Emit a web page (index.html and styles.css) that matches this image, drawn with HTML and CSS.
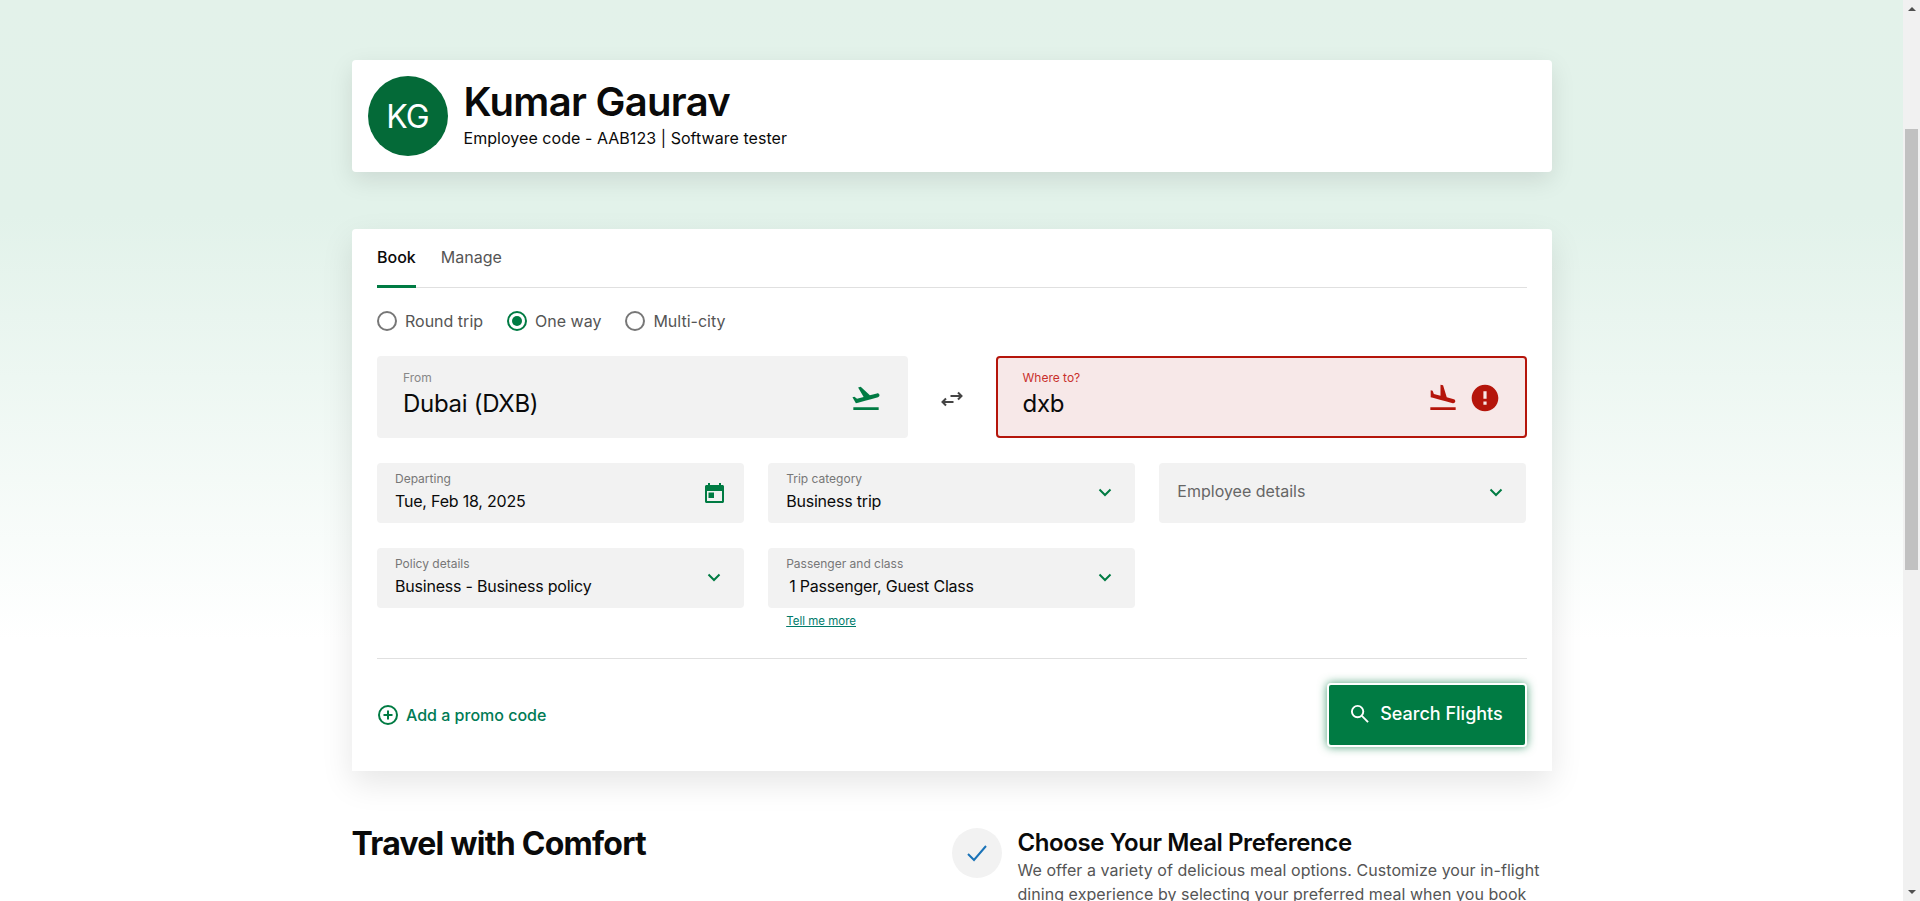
FILE: index.html
```html
<!DOCTYPE html>
<html lang="en">
<head>
    <meta charset="UTF-8">
    <meta name="viewport" content="width=device-width, initial-scale=1.0">
    <title>Book a flight</title>
    <link rel="stylesheet" href="styles.css">
</head>
<body>
    <div class="page">
        <main class="content">
            <!-- Employee -->
            <section class="profile-card">
                <div class="avatar">KG</div>
                <div class="profile-text">
                    <h1>Kumar Gaurav</h1>
                    <p>Employee code - AAB123 | Software tester</p>
                </div>
            </section>

            <!-- Booking widget -->
            <section class="booking-card">
                <div class="tabs">
                    <a href="#" class="tab active">Book</a>
                    <a href="#" class="tab">Manage</a>
                </div>

                <div class="trip-types">
                    <label class="radio"><span class="radio-dot"></span>Round trip</label>
                    <label class="radio checked"><span class="radio-dot"></span>One way</label>
                    <label class="radio"><span class="radio-dot"></span>Multi-city</label>
                </div>

                <div class="route">
                    <div class="route-field">
                        <div class="route-text">
                            <span class="route-label">From</span>
                            <span class="route-value">Dubai (DXB)</span>
                        </div>
                        <svg class="icon-plane" viewBox="0 0 24 24"><path d="M2.5 19h19v2h-19v-2zm19.57-9.36c-.21-.8-1.04-1.28-1.84-1.06L14.92 10l-6.9-6.43-1.93.51 4.14 7.17-4.97 1.33-1.97-1.54-1.45.39 1.82 3.16.77 1.33 1.6-.43 5.31-1.42 4.35-1.16L21 11.49c.81-.23 1.28-1.05 1.07-1.85z"/></svg>
                    </div>
                    <button class="swap" aria-label="Swap">
                        <svg viewBox="0 0 24 24"><path d="M10.5 9h11M18 5.500L21.500 9 18 12.500M13.500 15h-11M6 11.500L2.500 15 6 18.500"/></svg>
                    </button>
                    <div class="route-field error">
                        <div class="route-text">
                            <span class="route-label">Where to?</span>
                            <span class="route-value">dxb</span>
                        </div>
                        <svg class="icon-plane" viewBox="0 0 24 24"><path d="M2.5 19h19v2h-19v-2zm7.180-5.730l4.350 1.160 5.310 1.420c.8.210 1.620-.26 1.840-1.060.21-.8-.26-1.620-1.060-1.840l-5.310-1.420-2.760-9.020L10.120 2v8.280L5.150 8.950l-.93-2.320-1.450-.39v5.170l1.600.43 5.310 1.430z"/></svg>
                        <svg class="icon-error" viewBox="0 0 24 24"><path d="M12 2C6.480 2 2 6.480 2 12s4.480 10 10 10 10-4.480 10-10S17.520 2 12 2zm1.200 15h-2.400v-2.400h2.400V17zm0-4.400h-2.400V7h2.400v5.600z"/></svg>
                    </div>
                </div>

                <div class="fields">
                    <div class="field">
                        <div class="field-text">
                            <span class="field-label">Departing</span>
                            <span class="field-value">Tue, Feb 18, 2025</span>
                        </div>
                        <svg class="icon-calendar" viewBox="0 0 19 20">
                            <path fill-rule="evenodd" d="M3 0h2v2h9V0h2v2h1.500c.8 0 1.500.7 1.500 1.500v15c0 .8-.7 1.500-1.500 1.500h-16C.7 20 0 19.300 0 18.500v-15C0 2.700.7 2 1.500 2H3V0zM2 8v10h15V8H2z"/>
                            <rect x="3.500" y="9.500" width="5.500" height="5.500"/>
                        </svg>
                    </div>
                    <div class="field">
                        <div class="field-text">
                            <span class="field-label">Trip category</span>
                            <span class="field-value">Business trip</span>
                        </div>
                        <svg class="chevron" viewBox="0 0 14 9"><path d="M1.500 1.500L7 7l5.500-5.500"/></svg>
                    </div>
                    <div class="field">
                        <div class="field-text">
                            <span class="field-placeholder">Employee details</span>
                        </div>
                        <svg class="chevron" viewBox="0 0 14 9"><path d="M1.500 1.500L7 7l5.500-5.500"/></svg>
                    </div>
                    <div class="field">
                        <div class="field-text">
                            <span class="field-label">Policy details</span>
                            <span class="field-value">Business - Business policy</span>
                        </div>
                        <svg class="chevron" viewBox="0 0 14 9"><path d="M1.500 1.500L7 7l5.500-5.500"/></svg>
                    </div>
                    <div class="field-group">
                        <div class="field">
                            <div class="field-text">
                                <span class="field-label">Passenger and class</span>
                                <span class="field-value indent">1 Passenger, Guest Class</span>
                            </div>
                            <svg class="chevron" viewBox="0 0 14 9"><path d="M1.500 1.500L7 7l5.500-5.500"/></svg>
                        </div>
                        <a href="#" class="tell-more">Tell me more</a>
                    </div>
                </div>

                <div class="booking-footer">
                    <a href="#" class="promo">
                        <svg viewBox="0 0 20 20"><circle cx="10" cy="10" r="9"/><path d="M10 5.500v9M5.500 10h9"/></svg>
                        Add a promo code
                    </a>
                    <button class="search-btn">
                        <svg viewBox="0 0 20 20"><circle cx="8" cy="8" r="6"/><path d="M12.500 12.500L19 19"/></svg>
                        Search Flights
                    </button>
                </div>
            </section>

            <!-- Comfort section -->
            <section class="comfort">
                <h2>Travel with Comfort</h2>
                <div class="comfort-item">
                    <div class="check-circle">
                        <svg viewBox="0 0 24 24"><path d="M3 13l6 6L21 5"/></svg>
                    </div>
                    <div class="comfort-text">
                        <h3>Choose Your Meal Preference</h3>
                        <p>We offer a variety of delicious meal options. Customize your in-flight dining experience by selecting your preferred meal when you book</p>
                    </div>
                </div>
            </section>
        </main>

        <!-- Scrollbar -->
        <aside class="scrollbar">
            <span class="scroll-up"></span>
            <span class="scroll-thumb"></span>
            <span class="scroll-down"></span>
        </aside>
    </div>
</body>
</html>
```

FILE: styles.css
```css
* {
    margin: 0;
    padding: 0;
    box-sizing: border-box;
}

body {
    font-family: 'Inter', 'Liberation Sans', sans-serif;
    color: #0a0a0a;
    background: #fff;
    overflow: hidden;
}

.page {
    display: flex;
    height: 901px;
    overflow: hidden;
}

.content {
    flex: 1;
    padding: 60px 351.5px 0;
    background: linear-gradient(180deg, #e3f2ea 0, #e2f2ea 215px, #fff 640px);
}

/* Employee */
.profile-card {
    display: flex;
    align-items: center;
    gap: 16px;
    height: 112px;
    padding: 0 16px;
    background: #fff;
    border-radius: 4px;
    box-shadow: 0 8px 24px rgba(0, 0, 0, 0.1);
}

.avatar {
    width: 80px;
    height: 80px;
    flex: none;
    display: flex;
    align-items: center;
    justify-content: center;
    border-radius: 50%;
    background: #046a38;
    color: #fff;
    font-size: 32px;
    letter-spacing: -1px;
}

.profile-text h1 {
    font-size: 40px;
    line-height: 48px;
    font-weight: 600;
    letter-spacing: -0.7px;
    margin-top: -5px;
}

.profile-text p {
    font-size: 16px;
    line-height: 22px;
    letter-spacing: 0.05px;
    margin-top: 1px;
}

/* Booking card */
.booking-card {
    margin-top: 57px;
    height: 542px;
    padding: 0 25px 0 25.5px;
    background: #fff;
    border-radius: 4px 4px 0 0;
    box-shadow: 0 12px 32px rgba(0, 0, 0, 0.1);
}

.tabs {
    display: flex;
    gap: 25px;
    height: 59px;
    border-bottom: 1px solid #e0e0e0;
}

.tab {
    padding-top: 18px;
    font-size: 16px;
    line-height: 20px;
    color: #555;
    text-decoration: none;
}

.tab.active {
    color: #0a0a0a;
    font-weight: 500;
    border-bottom: 3px solid #007b43;
    margin-bottom: -1px;
}

.trip-types {
    display: flex;
    gap: 24px;
    height: 66px;
    margin-bottom: 2px;
    align-items: center;
}

.radio {
    display: flex;
    align-items: center;
    gap: 8px;
    font-size: 16px;
    color: #555;
}

.radio-dot {
    width: 20px;
    height: 20px;
    border: 2px solid #777;
    border-radius: 50%;
    display: flex;
    align-items: center;
    justify-content: center;
}

.radio.checked .radio-dot {
    border-color: #007b43;
}

.radio.checked .radio-dot::after {
    content: "";
    width: 10px;
    height: 10px;
    border-radius: 50%;
    background: #007b43;
}

/* From / to */
.route {
    display: flex;
    align-items: center;
    justify-content: space-between;
}

.route-field {
    display: flex;
    align-items: center;
    gap: 10px;
    width: 531px;
    height: 82px;
    padding: 0 26px;
    background: #f2f2f2;
    border-radius: 4px;
}

.route-text {
    flex: 1;
    display: flex;
    flex-direction: column;
    padding-bottom: 6px;
}

.route-label {
    font-size: 12px;
    line-height: 16px;
    color: #888;
}

.route-value {
    margin-top: 3px;
    font-size: 24px;
    line-height: 30px;
    letter-spacing: -0.3px;
}

.icon-plane {
    width: 32px;
    height: 32px;
    margin-top: 2px;
    fill: #007b43;
}

.swap {
    width: 24px;
    height: 24px;
    margin-top: 3px;
    border: none;
    background: none;
}

.swap svg {
    width: 24px;
    height: 24px;
    fill: none;
    stroke: #444;
    stroke-width: 2;
}

.route-field.error {
    background: #f7e8e8;
    border: 2px solid #b5150b;
    padding: 0 24px 0 25px;
}

.route-field.error .route-label {
    color: #c9302c;
}

.route-field.error .icon-plane {
    fill: #b5150b;
}

.icon-error {
    width: 32px;
    height: 32px;
    margin-top: 2px;
    fill: #b5150b;
}

/* Details grid */
.fields {
    display: grid;
    grid-template-columns: repeat(3, 1fr);
    gap: 25px 24.5px;
    margin-top: 25px;
    padding-right: 0.5px;
}

.field {
    display: flex;
    align-items: center;
    height: 60px;
    padding: 0 18px;
    background: #f2f2f2;
    border-radius: 4px;
}

.field-text {
    flex: 1;
    display: flex;
    flex-direction: column;
    padding-bottom: 2px;
}

.field-label {
    font-size: 12px;
    line-height: 16px;
    color: #777;
    margin-top: -2px;
}

.field-value {
    margin-top: 3px;
    font-size: 16px;
    line-height: 22px;
    letter-spacing: -0.2px;
}

.field-value.indent {
    padding-left: 3px;
}

.field-placeholder {
    font-size: 16px;
    color: #666;
    margin-top: -2px;
}

.chevron {
    width: 14px;
    height: 9px;
    margin-right: 5px;
    margin-top: -2px;
    fill: none;
    stroke: #007b43;
    stroke-width: 2;
}

.icon-calendar {
    width: 19px;
    height: 20px;
    margin-right: 2px;
    fill: #007b43;
}

.tell-more {
    display: block;
    margin: 6px 0 0 18px;
    font-size: 11.5px;
    line-height: 14px;
    color: #007b6b;
}

.field-group {
    height: 60px;
}

/* Footer */
.booking-footer {
    display: flex;
    align-items: center;
    justify-content: space-between;
    margin-top: 50px;
    padding-top: 24px;
    border-top: 1px solid #e0e0e0;
}

.promo {
    display: flex;
    align-items: center;
    gap: 8px;
    padding-left: 1px;
    font-size: 16px;
    font-weight: 500;
    color: #007b55;
    text-decoration: none;
}

.promo svg {
    width: 20px;
    height: 20px;
    fill: none;
    stroke: #007b43;
    stroke-width: 2;
}

.search-btn {
    display: flex;
    align-items: center;
    justify-content: center;
    gap: 11px;
    width: 200px;
    height: 64px;
    padding-bottom: 3px;
    background: #007b43;
    color: #fff;
    border: 2px solid #fff;
    border-radius: 4px;
    box-shadow: 0 0 10px rgba(0, 123, 67, 0.7);
    font-family: inherit;
    font-size: 18px;
    font-weight: 500;
}

.search-btn svg {
    width: 19px;
    height: 19px;
    fill: none;
    stroke: #fff;
    stroke-width: 2;
}

/* Comfort */
.comfort {
    display: flex;
    margin-top: 54px;
}

.comfort h2 {
    width: 600px;
    font-size: 32px;
    line-height: 38px;
    font-weight: 700;
    letter-spacing: -0.75px;
}

.comfort-item {
    display: flex;
    gap: 16px;
    flex: 1;
}

.check-circle {
    width: 50px;
    height: 50px;
    flex: none;
    margin-top: 3px;
    display: flex;
    align-items: center;
    justify-content: center;
    border-radius: 50%;
    background: #f2f2f2;
}

.check-circle svg {
    width: 24px;
    height: 24px;
    fill: none;
    stroke: #1a73b8;
    stroke-width: 2;
}

.comfort-text {
    padding-top: 3px;
}

.comfort-text h3 {
    font-size: 24px;
    line-height: 30px;
    font-weight: 600;
    letter-spacing: -0.4px;
}

.comfort-text p {
    font-size: 16px;
    line-height: 24px;
    letter-spacing: 0.05px;
    color: #555;
}

/* Scrollbar */
.scrollbar {
    width: 17px;
    flex: none;
    display: flex;
    flex-direction: column;
    align-items: center;
    background: #f1f1f1;
}

.scroll-up {
    margin-top: 7px;
    border-left: 4px solid transparent;
    border-right: 4px solid transparent;
    border-bottom: 4px solid #505050;
}

.scroll-thumb {
    width: 13px;
    height: 441px;
    margin-top: 118px;
    background: #c1c1c1;
}

.scroll-down {
    margin-top: auto;
    margin-bottom: 7px;
    border-left: 4px solid transparent;
    border-right: 4px solid transparent;
    border-top: 4px solid #505050;
}
```
